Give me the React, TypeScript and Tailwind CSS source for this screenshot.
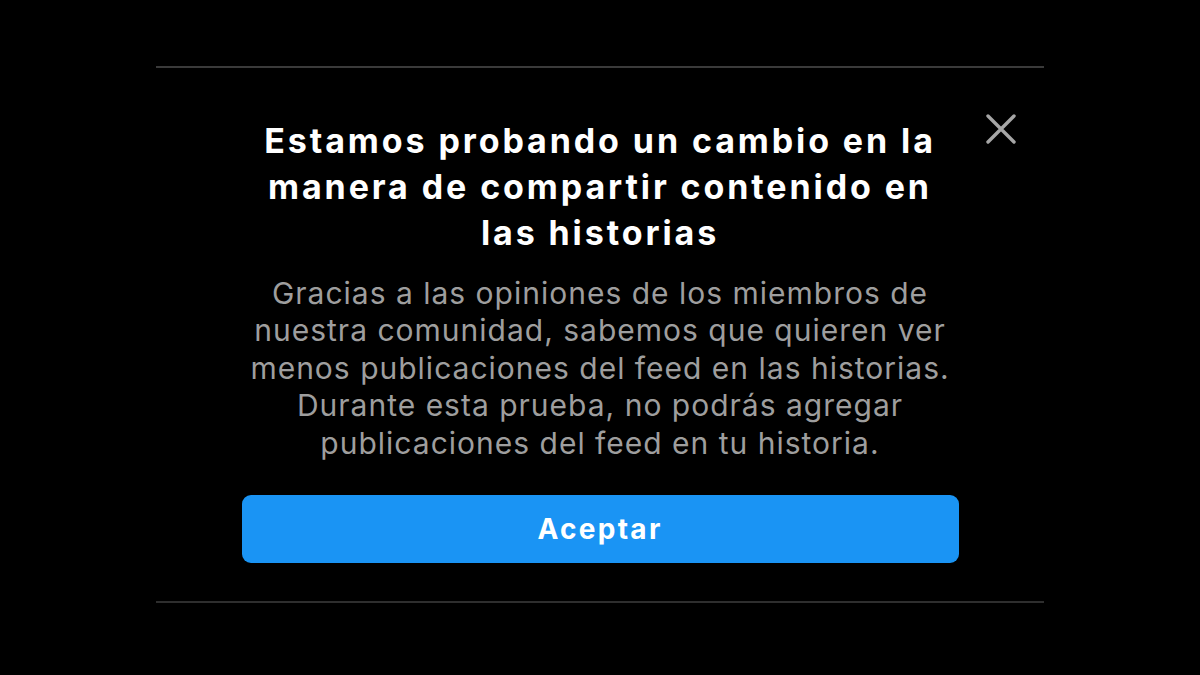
const BODY = [
  "Gracias a las opiniones de los miembros de",
  "nuestra comunidad, sabemos que quieren ver",
  "menos publicaciones del feed en las historias.",
  "Durante esta prueba, no podrás agregar",
  "publicaciones del feed en tu historia.",
];

const TITLE = [
  "Estamos probando un cambio en la",
  "manera de compartir contenido en",
  "las historias",
];

export default function App() {
  return (
    <div
      className="w-[1200px] h-[675px] bg-black flex flex-col items-center overflow-hidden"
      style={{ fontFamily: "Inter, 'Noto Sans', 'Liberation Sans', sans-serif" }}
    >
      <div className="mt-[66px] w-[888px] h-[2px] bg-[#3a3a3a]" />

      <div className="relative w-[888px] flex flex-col items-center">
        {/* cerrar */}
        <button className="absolute right-[28px] top-[46px] text-[#a6a6a6]">
          <svg width="30" height="30" viewBox="0 0 30 30" fill="none" stroke="currentColor" strokeWidth="3.4" strokeLinecap="round">
            <path d="M2 2 L28 28 M28 2 L2 28" />
          </svg>
        </button>

        <h1 className="mt-[50px] text-white text-[34px] leading-[46px] font-bold text-center tracking-[2.9px]">
          {TITLE.map((l) => (
            <div key={l}>{l}</div>
          ))}
        </h1>

        <div className="mt-[19px] text-[#9e9e9e] text-[30px] leading-[37.4px] text-center tracking-[1px]">
          {BODY.map((l) => (
            <div key={l}>{l}</div>
          ))}
        </div>

        <button className="mt-[33px] w-[717px] h-[68px] rounded-[9px] bg-[#1a94f4] text-white text-[28px] font-bold tracking-[2.3px]">
          Aceptar
        </button>
      </div>

      <div className="mt-[38px] w-[888px] h-[2px] bg-[#2e2e2e]" />
    </div>
  );
}
